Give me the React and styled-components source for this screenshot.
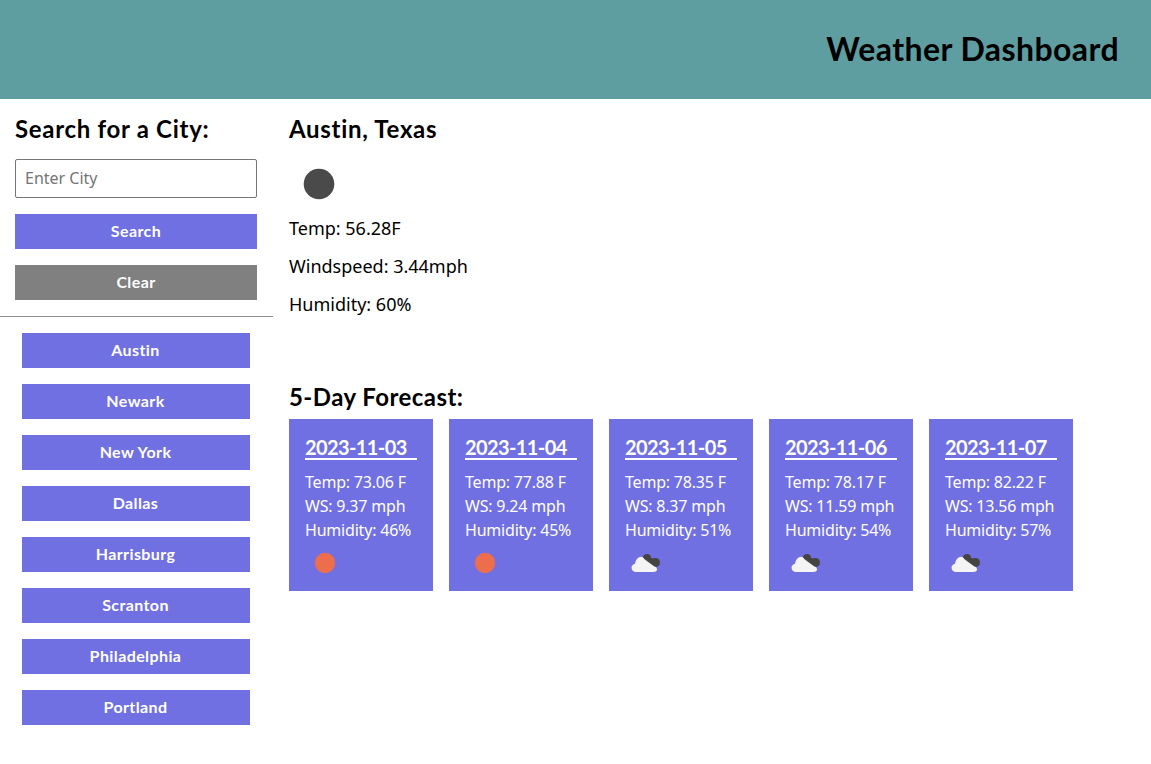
import React from 'react';
import styled, { createGlobalStyle } from 'styled-components';

const GlobalStyle = createGlobalStyle`
	html, body {
		margin: 0;
		padding: 0;
		background: #fff;
		font-family: "Noto Sans", "Open Sans", sans-serif;
		color: #000;
	}
	* {
		box-sizing: border-box;
	}
`;

const boldFont = `"Lato", "Noto Sans", sans-serif`;

const Header = styled.header`
	height: 99px;
	background-color: #5f9ea0;
	display: flex;
	justify-content: flex-end;
	align-items: center;
	padding: 0 32px 2px 0;
`;

const Title = styled.h1`
	margin: 0;
	font-family: ${boldFont};
	font-size: 32px;
	line-height: 40px;
	font-weight: 700;
	letter-spacing: 0.42px;
`;

const Layout = styled.div`
	display: flex;
	align-items: flex-start;
`;

const Sidebar = styled.aside`
	width: 273px;
	flex-shrink: 0;
`;

const SearchForm = styled.form`
	display: flex;
	flex-direction: column;
	padding: 15px 16px 16px 15px;
	border-bottom: 1px solid #8c8c8c;
`;

const SectionTitle = styled.h2`
	margin: 0 0 ${({ $gap }) => $gap || 0}px;
	font-family: ${boldFont};
	font-size: 24px;
	line-height: 30px;
	font-weight: 700;
	letter-spacing: ${({ $spacing }) => $spacing || 0.7}px;
`;

const CityInput = styled.input`
	height: 39px;
	width: 242px;
	padding: 0 9px 2px;
	border: 1px solid #767676;
	border-radius: 2px;
	font: inherit;
	font-size: 16px;
	margin-bottom: 16px;
	&::placeholder {
		color: #757575;
		opacity: 1;
	}
`;

const Button = styled.button`
	display: block;
	height: 35px;
	width: ${({ $wide }) => ($wide ? '242px' : '228px')};
	border: 0;
	padding: 0 0 2px;
	background-color: ${({ $gray }) => ($gray ? '#808080' : '#7070e2')};
	color: #fff;
	font-family: ${boldFont};
	font-size: 16px;
	font-weight: 700;
	letter-spacing: 0.4px;
	margin-bottom: ${({ $last }) => ($last ? 0 : 16)}px;
`;

const CityList = styled.div`
	display: flex;
	flex-direction: column;
	align-items: center;
	gap: 16px;
	padding: 16px 2px 0 0;
`;

const Main = styled.main`
	flex: 1;
	padding: 15px 16px 0;
`;

const Today = styled.section`
	height: 268px;
`;

const Stat = styled.p`
	margin: 0 0 16px;
	font-size: 18px;
	line-height: 22px;
`;

const WeatherIcon = styled.svg`
	display: block;
	width: ${({ $size }) => $size}px;
	height: ${({ $size }) => $size}px;
`;

const TodayIcon = styled.div`
	margin: 10px 0 3px;
`;

const Forecast = styled.div`
	display: flex;
	gap: 16px;
`;

const Card = styled.article`
	width: 144px;
	height: 172px;
	padding: 16px;
	background-color: #7070e2;
	color: #fff;
`;

const CardDate = styled.h3`
	margin: 0 0 10px;
	width: 112px;
	height: 25px;
	border-bottom: 2px solid #fff;
	font-family: ${boldFont};
	font-size: 20px;
	line-height: 24px;
	font-weight: 700;
	letter-spacing: -0.6px;
	white-space: nowrap;
`;

const CardLine = styled.p`
	margin: 0;
	font-size: 16px;
	line-height: 24px;
	letter-spacing: -0.2px;
	white-space: nowrap;
`;

const CardIcon = styled.div`
	margin-top: 1px;
`;

const Disc = ({ size, color }) => (
	<WeatherIcon $size={size} viewBox="0 0 40 40">
		<circle cx="20" cy="20" r="10.2" fill={color} />
	</WeatherIcon>
);

const Cloudy = () => (
	<WeatherIcon $size={40} viewBox="0 0 40 40">
		<g fill="#444">
			<circle cx="22" cy="15" r="4" />
			<circle cx="26.5" cy="18" r="3" />
			<circle cx="30.5" cy="19.5" r="4.5" />
			<path d="M18 16 L29 24 L33 22 L24 15z" />
		</g>
		<path
			fill="#f4f4f4"
			d="M11 29c-2.500 0-4.500-1.800-4.500-4.200 0-2.100 1.500-3.800 3.500-4.100.7-3.800 3.100-6.900 6-6.900 1.400 0 2.700.9 3.500 2.500l9.500 7c1.700.4 3 1.400 3 3 0 2.400-1.800 2.700-3.800 2.700z"
		/>
	</WeatherIcon>
);

const cities = ['Austin', 'Newark', 'New York', 'Dallas', 'Harrisburg', 'Scranton', 'Philadelphia', 'Portland'];

const days = [
	{ date: '2023-11-03', temp: '73.06', ws: '9.37', hum: '46', sunny: true },
	{ date: '2023-11-04', temp: '77.88', ws: '9.24', hum: '45', sunny: true },
	{ date: '2023-11-05', temp: '78.35', ws: '8.37', hum: '51' },
	{ date: '2023-11-06', temp: '78.17', ws: '11.59', hum: '54' },
	{ date: '2023-11-07', temp: '82.22', ws: '13.56', hum: '57' },
];

const App = () => {
	return (
		<>
			<GlobalStyle />
			<Header>
				<Title>Weather Dashboard</Title>
			</Header>
			<Layout>
				<Sidebar>
					<SearchForm>
						<SectionTitle $gap={15}>Search for a City:</SectionTitle>
						<CityInput placeholder="Enter City" />
						<Button type="button" $wide>Search</Button>
						<Button type="button" $wide $gray $last>Clear</Button>
					</SearchForm>
					<CityList>
						{cities.map((city) => (
							<Button type="button" key={city} $last>{city}</Button>
						))}
					</CityList>
				</Sidebar>
				<Main>
					<Today>
						<SectionTitle>Austin, Texas</SectionTitle>
						<TodayIcon>
							<Disc size={60} color="#4a4a4a" />
						</TodayIcon>
						<Stat>Temp: 56.28F</Stat>
						<Stat>Windspeed: 3.44mph</Stat>
						<Stat>Humidity: 60%</Stat>
					</Today>
					<SectionTitle $gap={7} $spacing={0.45}>5-Day Forecast:</SectionTitle>
					<Forecast>
						{days.map((day) => (
							<Card key={day.date}>
								<CardDate>{day.date}</CardDate>
								<CardLine>Temp: {day.temp} F</CardLine>
								<CardLine>WS: {day.ws} mph</CardLine>
								<CardLine>Humidity: {day.hum}%</CardLine>
								<CardIcon>
									{day.sunny ? <Disc size={40} color="#ec6e4c" /> : <Cloudy />}
								</CardIcon>
							</Card>
						))}
					</Forecast>
				</Main>
			</Layout>
		</>
	);
};

export default App;
